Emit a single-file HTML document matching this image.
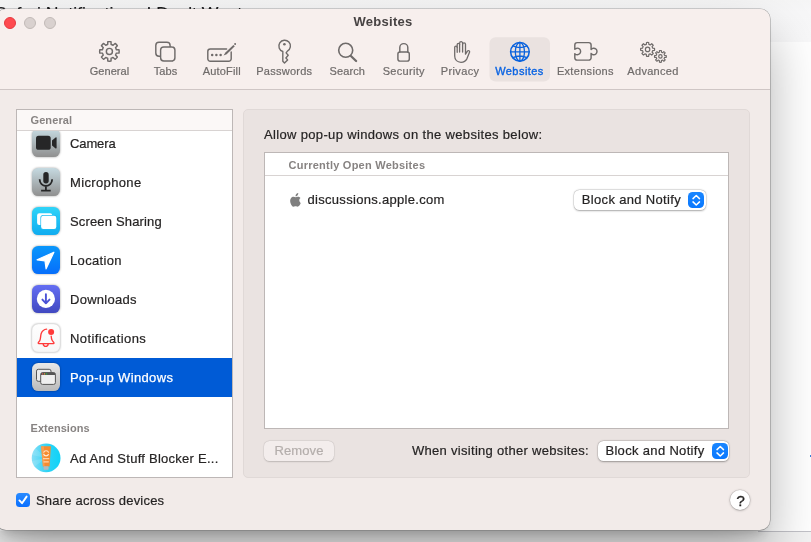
<!DOCTYPE html>
<html lang="en">
<head>
<meta charset="utf-8">
<title>Websites</title>
<style>
*{box-sizing:border-box;margin:0;padding:0}
html,body{width:811px;height:542px;overflow:hidden}
body{position:relative;background:#fff;font-family:"Liberation Sans",sans-serif;font-size:13px;color:#262424;-webkit-font-smoothing:antialiased;-webkit-text-stroke-width:.2px}
.abs{position:absolute}
#bgtop{left:0;top:0;width:811px;height:42px;background:linear-gradient(#f5f5f5 0,#f7f7f8 12px,#f8f8f9 100%)}
#bgtitle{will-change:transform;left:-4.7px;top:3.7px;font-size:17.6px;color:#1d1d1f;white-space:nowrap}
#bgbot{left:0;top:531px;width:811px;height:11px;background:linear-gradient(90deg,#f3f3f3 758px,#c2c2c8 758px) top/100% 1px no-repeat,#f3f3f3}
#win{will-change:transform;left:-4px;top:9px;width:774px;height:521px;border-radius:10px;background:#f2ebe9;
 box-shadow:0 0 0 .6px rgba(0,0,0,.32),0 27px 52px rgba(0,0,0,.3),0 10px 12px -7px rgba(0,0,0,.22);overflow:hidden}
#tbar{left:0;top:0;width:774px;height:81px;background:#f7efed;border-bottom:1px solid #cfc6c5}
.tl{top:8px;width:12px;height:12px;border-radius:50%;background:#d9d1cf;border:1px solid #c1b9b7}
#title{-webkit-text-stroke-width:0;left:0;top:5px;width:774px;text-align:center;font-weight:700;font-size:13px;color:#474343;letter-spacing:.27px;padding-left:0}
.lb{top:56px;width:80px;font-size:11px;color:#6f6b6a;text-align:center;white-space:nowrap;letter-spacing:.05px}
#side{left:20px;top:100px;width:217px;height:369px;background:#fff;border:1px solid #bdb7b6;overflow:hidden}
.hdr{left:0;top:0;width:215px;height:21px;background:#fbf8f7;border-bottom:1px solid #d8d3d2;z-index:3}
.sec{font-weight:700;font-size:11px;color:#878382;letter-spacing:.1px;-webkit-text-stroke-width:0}
.row{left:0;width:215px;height:39px}
.row .ic{position:absolute;left:15px;top:5px;filter:drop-shadow(0 .8px .9px rgba(0,0,0,.38))}
.row .tx{position:absolute;left:53px;top:12px;white-space:nowrap;letter-spacing:.35px}
.sel{background:#005bd6;color:#fff;-webkit-text-stroke:.25px #fff}
#box{left:247px;top:100px;width:507px;height:369px;background:#eae3e1;border:1px solid #e0d9d7;border-radius:5px}
#tbl{left:268px;top:143px;width:465px;height:277px;background:#fff;border:1px solid #bdb7b6}
.pop{width:131.5px;height:20px;background:#fff;border-radius:5.5px;box-shadow:0 0 0 .5px rgba(0,0,0,.12),0 .5px 2px rgba(0,0,0,.3)}
.pop .t{position:absolute;left:7.6px;top:2.7px;letter-spacing:.33px;white-space:nowrap}
.pop .st{position:absolute;right:1.5px;top:1.9px;width:16.3px;height:16.3px;border-radius:4.6px;background:linear-gradient(#1a86ff,#0978ff)}
</style>
</head>
<body>
<div class="abs" id="bgtop"></div>
<div class="abs" id="bgtitle">Safari Notifications I Don't Want</div>
<div class="abs" id="bgbot"></div>
<div class="abs" style="left:809.8px;top:454.6px;width:2px;height:2.5px;background:#3b7fdc"></div>

<div class="abs" id="win">
 <div class="abs" id="tbar"></div>
 <div class="abs tl" style="left:8px;background:#fe4a4f;border-color:#e5393f"></div>
 <div class="abs tl" style="left:28px"></div>
 <div class="abs tl" style="left:48px"></div>
 <div class="abs" id="title">Websites</div>

 <!-- toolbar items inserted here -->
 <!--TB0--><svg class="abs" style="left:0;top:0" width="774" height="81" viewBox="-4 9 774 81" fill="none" stroke="#6f6b6a" stroke-width="1.45" stroke-linejoin="round" stroke-linecap="round">
<rect x="489.5" y="37.3" width="60.5" height="44.2" rx="6" fill="#eae2e0" stroke="none"/>
<path d="M107.68 44.51L107.79 41.78A9.75 9.75 0 0 1 111.01 41.78L111.12 44.51A7.10 7.10 0 0 1 113.06 45.31L115.06 43.46A9.75 9.75 0 0 1 117.34 45.74L115.49 47.74A7.10 7.10 0 0 1 116.29 49.68L119.02 49.79A9.75 9.75 0 0 1 119.02 53.01L116.29 53.12A7.10 7.10 0 0 1 115.49 55.06L117.34 57.06A9.75 9.75 0 0 1 115.06 59.34L113.06 57.49A7.10 7.10 0 0 1 111.12 58.29L111.01 61.02A9.75 9.75 0 0 1 107.79 61.02L107.68 58.29A7.10 7.10 0 0 1 105.74 57.49L103.74 59.34A9.75 9.75 0 0 1 101.46 57.06L103.31 55.06A7.10 7.10 0 0 1 102.51 53.12L99.78 53.01A9.75 9.75 0 0 1 99.78 49.79L102.51 49.68A7.10 7.10 0 0 1 103.31 47.74L101.46 45.74A9.75 9.75 0 0 1 103.74 43.46L105.74 45.31A7.10 7.10 0 0 1 107.68 44.51 Z"/><circle cx="109.4" cy="51.4" r="3.05"/>
<rect x="155.8" y="42.3" width="14.3" height="14" rx="3.2"/><rect x="160.6" y="46.9" width="14.3" height="14.1" rx="3.2" fill="#f7efed"/>
<path d="M226.6 48.9H210.3a2.5 2.5 0 0 0-2.5 2.5v7.3a2.5 2.5 0 0 0 2.5 2.5h18.4a2.5 2.5 0 0 0 2.5-2.5V52"/>
<g fill="#6f6b6a" stroke="none"><circle cx="212.2" cy="55.1" r="1.25"/><circle cx="216.4" cy="55.1" r="1.25"/><circle cx="220.6" cy="55.1" r="1.25"/><circle cx="235.1" cy="44" r="1"/>
<path d="M223.6 55.6L225.4 52.6L233.4 44.9L234.8 46.3L226.7 54.2Z"/></g>
<path d="M282.8 51.5V61.2L284.5 63L287.6 59.9L285.9 58L288.2 55.3L286.1 52.9L287.4 51.1A5.8 5.8 0 1 0 282.8 51.5Z" stroke-width="1.4"/><circle cx="284.4" cy="44.2" r="1.3" fill="#6f6b6a" stroke="none"/>
<circle cx="345.7" cy="50.3" r="7" stroke-width="1.6"/><path d="M350.9 56L356.1 61" stroke-width="2.3"/>
<rect x="397.9" y="51.9" width="11.4" height="9.2" rx="2.1"/><path d="M399.8 51.9V47.6a4 4 0 0 1 8 0V51.9"/>
<g stroke-width="1.3"><path d="M454.7 56V47.3a1.25 1.25 0 0 1 2.5 0V44.5a1.2 1.2 0 0 1 2.4 0V43.2a1.5 1.5 0 0 1 3 0V44.3a1.45 1.45 0 0 1 2.9 0V54.2L467.6 50.9a1.2 1.2 0 0 1 2 1.1L467 58.6C465.6 61.4 463.2 62.3 461 62.3C457.4 62.3 454.7 60 454.7 56Z"/><path d="M457.2 47.3V52.3M459.6 44.5V52M462.6 44.3V52"/></g>
<g stroke="#0b63dd" stroke-width="1.3"><circle cx="519.9" cy="51.8" r="9.3" stroke-width="1.55"/><ellipse cx="519.9" cy="51.8" rx="4.6" ry="9.3"/><path d="M519.9 42.5V61.1M510.6 51.8H529.2M512.9 45.9C517 47.9 522.8 47.9 526.9 45.9M512.9 57.7C517 55.7 522.8 55.7 526.9 57.7"/></g>
<path d="M574.8 49.3V45a2.4 2.4 0 0 1 2.4-2.4H588.7a2.4 2.4 0 0 1 2.4 2.4V49.6A3.25 3.25 0 1 1 591.1 53.4V57.7a2.4 2.4 0 0 1-2.4 2.4H577.2a2.4 2.4 0 0 1-2.4-2.4V53.6A3.3 3.3 0 1 0 574.8 49.3Z"/>
<g stroke-width="1.2"><path d="M646.34 44.35L646.50 42.49A7.00 7.00 0 0 1 648.70 42.49L648.86 44.35A5.20 5.20 0 0 1 650.28 44.94L651.71 43.74A7.00 7.00 0 0 1 653.26 45.29L652.06 46.72A5.20 5.20 0 0 1 652.65 48.14L654.51 48.30A7.00 7.00 0 0 1 654.51 50.50L652.65 50.66A5.20 5.20 0 0 1 652.06 52.08L653.26 53.51A7.00 7.00 0 0 1 651.71 55.06L650.28 53.86A5.20 5.20 0 0 1 648.86 54.45L648.70 56.31A7.00 7.00 0 0 1 646.50 56.31L646.34 54.45A5.20 5.20 0 0 1 644.92 53.86L643.49 55.06A7.00 7.00 0 0 1 641.94 53.51L643.14 52.08A5.20 5.20 0 0 1 642.55 50.66L640.69 50.50A7.00 7.00 0 0 1 640.69 48.30L642.55 48.14A5.20 5.20 0 0 1 643.14 46.72L641.94 45.29A7.00 7.00 0 0 1 643.49 43.74L644.92 44.94A5.20 5.20 0 0 1 646.34 44.35 Z"/><circle cx="647.6" cy="49.4" r="2.2"/><path d="M659.36 52.23L659.48 50.57A5.90 5.90 0 0 1 661.32 50.57L661.44 52.23A4.30 4.30 0 0 1 662.61 52.71L663.87 51.63A5.90 5.90 0 0 1 665.17 52.93L664.09 54.19A4.30 4.30 0 0 1 664.57 55.36L666.23 55.48A5.90 5.90 0 0 1 666.23 57.32L664.57 57.44A4.30 4.30 0 0 1 664.09 58.61L665.17 59.87A5.90 5.90 0 0 1 663.87 61.17L662.61 60.09A4.30 4.30 0 0 1 661.44 60.57L661.32 62.23A5.90 5.90 0 0 1 659.48 62.23L659.36 60.57A4.30 4.30 0 0 1 658.19 60.09L656.93 61.17A5.90 5.90 0 0 1 655.63 59.87L656.71 58.61A4.30 4.30 0 0 1 656.23 57.44L654.57 57.32A5.90 5.90 0 0 1 654.57 55.48L656.23 55.36A4.30 4.30 0 0 1 656.71 54.19L655.63 52.93A5.90 5.90 0 0 1 656.93 51.63L658.19 52.71A4.30 4.30 0 0 1 659.36 52.23 Z"/><circle cx="660.4" cy="56.4" r="1.7"/></g>
</svg>
 <div class="abs lb" style="left:73.5px">General</div>
 <div class="abs lb" style="left:129.5px">Tabs</div>
 <div class="abs lb" style="left:185.8px;letter-spacing:0.15px">AutoFill</div>
 <div class="abs lb" style="left:248.3px;letter-spacing:0.26px">Passwords</div>
 <div class="abs lb" style="left:311.3px;letter-spacing:0.1px">Search</div>
 <div class="abs lb" style="left:367.8px;letter-spacing:0.3px">Security</div>
 <div class="abs lb" style="left:424.1px;letter-spacing:0.35px">Privacy</div>
 <div class="abs lb" style="left:483.5px;color:#0b64e2;-webkit-text-stroke:.35px #0b64e2;letter-spacing:.45px">Websites</div>
 <div class="abs lb" style="left:549.4px;letter-spacing:0.32px">Extensions</div>
 <div class="abs lb" style="left:617.0px;letter-spacing:0.3px">Advanced</div>
<!--TB1-->

 <div class="abs" id="side">
  <div class="abs hdr"><span class="abs sec" style="left:13.5px;top:4px">General</span></div>
  <!--R0-->
  <div class="row abs" style="top:14px"><svg class="ic" width="28" height="28" viewBox="0 0 28 28"><defs><linearGradient id="gc" x1="0" y1="0" x2="0" y2="1"><stop offset="0" stop-color="#c6dae1"/><stop offset="1" stop-color="#909090"/></linearGradient></defs><rect width="28" height="28" rx="6.3" fill="url(#gc)"/><rect x="4" y="6.8" width="14.7" height="14" rx="2.6" fill="#262627"/><path d="M20 11.4L23.6 8.4Q24.6 7.8 24.6 9V18.8Q24.6 20 23.6 19.4L20 16.4Z" fill="#262627"/></svg><span class="tx" style="letter-spacing:-0.12px">Camera</span></div>
  <div class="row abs" style="top:53px"><svg class="ic" width="28" height="28" viewBox="0 0 28 28"><defs><linearGradient id="gm" x1="0" y1="0" x2="0" y2="1"><stop offset="0" stop-color="#c6dae1"/><stop offset="1" stop-color="#909090"/></linearGradient></defs><rect width="28" height="28" rx="6.3" fill="url(#gm)"/><rect x="11.3" y="4" width="5.4" height="11.4" rx="2.7" fill="#262627"/><path d="M7.7 11.3V11.8a6.2 6.2 0 0 0 12.4 0V11.3M13.9 18V22.6M9.1 22.6H18.7" fill="none" stroke="#262627" stroke-width="1.8"/></svg><span class="tx" style="letter-spacing:0.36px">Microphone</span></div>
  <div class="row abs" style="top:92px"><svg class="ic" width="28" height="28" viewBox="0 0 28 28"><defs><linearGradient id="gs" x1="0" y1="0" x2="0" y2="1"><stop offset="0" stop-color="#2fd4f8"/><stop offset="1" stop-color="#10acf0"/></linearGradient></defs><rect width="28" height="28" rx="6.3" fill="url(#gs)"/><rect x="5.1" y="6.2" width="15.1" height="11.8" rx="2.2" fill="#fff"/><rect x="8.4" y="8.1" width="16.6" height="14.6" rx="2.8" fill="#1cbcf3"/><rect x="9.1" y="8.8" width="15.2" height="13.2" rx="2.2" fill="#fff"/></svg><span class="tx" style="letter-spacing:0.16px">Screen Sharing</span></div>
  <div class="row abs" style="top:131px"><svg class="ic" width="28" height="28" viewBox="0 0 28 28"><defs><linearGradient id="gl" x1="0" y1="0" x2="0" y2="1"><stop offset="0" stop-color="#0a97fb"/><stop offset="1" stop-color="#066efb"/></linearGradient></defs><rect width="28" height="28" rx="6.3" fill="url(#gl)"/><path d="M21.9 6.2L5.1 13.8L13 14.8L14.1 22.8Z" fill="#fff" stroke="#fff" stroke-width="1.2" stroke-linejoin="round"/></svg><span class="tx" style="letter-spacing:0.35px">Location</span></div>
  <div class="row abs" style="top:170px"><svg class="ic" width="28" height="28" viewBox="0 0 28 28"><defs><linearGradient id="gd" x1="0" y1="0" x2="0" y2="1"><stop offset="0" stop-color="#646ef3"/><stop offset="1" stop-color="#4048c0"/></linearGradient></defs><rect width="28" height="28" rx="6.3" fill="url(#gd)"/><circle cx="13.9" cy="13.9" r="9.1" fill="#fff"/><path d="M13.9 9.3V18.2M10.4 14.6L13.9 18.3L17.5 14.6" fill="none" stroke="#4a52d6" stroke-width="1.9" stroke-linecap="round" stroke-linejoin="round"/></svg><span class="tx" style="letter-spacing:0.28px">Downloads</span></div>
  <div class="row abs" style="top:209px"><svg class="ic" width="28" height="28" viewBox="0 0 28 28"><defs><linearGradient id="gn" x1="0" y1="0" x2="0" y2="1"><stop offset="0" stop-color="#fefefe"/><stop offset="1" stop-color="#f7f7f7"/></linearGradient></defs><rect width="28" height="28" rx="6.3" fill="url(#gn)" stroke="#e4e4e4" stroke-width=".5"/><path d="M14.6 5.2C12.5 5.4 10.2 7 9.2 9.6C8.4 11.8 8.8 14.8 7.8 16.6C7.2 17.7 6.2 18.2 6.2 19C6.2 19.4 6.5 19.6 7 19.6H21.3C21.8 19.6 22 19.3 22 19C22 18.2 20.6 17.4 20 16C19.4 14.6 19.3 13.4 19.2 12.2M11.1 19.8C11.4 21.4 12.4 22.4 13.7 22.4C15 22.4 16 21.4 16.3 19.8" fill="none" stroke="#ff3a3a" stroke-width="1.35" stroke-linecap="round"/><circle cx="19.1" cy="7.9" r="3" fill="#ff3a3a"/></svg><span class="tx" style="letter-spacing:0.42px">Notifications</span></div>
  <div class="row abs sel" style="top:248px"><svg class="ic" width="28" height="28" viewBox="0 0 28 28"><defs><linearGradient id="gp" x1="0" y1="0" x2="0" y2="1"><stop offset="0" stop-color="#e8e8e8"/><stop offset="1" stop-color="#bababa"/></linearGradient></defs><rect width="28" height="28" rx="6.3" fill="url(#gp)"/><rect x="4.5" y="6.3" width="14.5" height="12" rx="1.8" fill="#ececec" stroke="#555" stroke-width="1"/><rect x="8.7" y="9.6" width="14.7" height="11.8" rx="1.8" fill="#efefef" stroke="#555" stroke-width="1"/><path d="M8.7 12.1V11.4a1.8 1.8 0 0 1 1.8-1.8H21.6a1.8 1.8 0 0 1 1.8 1.8V12.1Z" fill="#555"/><circle cx="10.6" cy="10.9" r=".6" fill="#ff5f57"/><circle cx="12.6" cy="10.9" r=".6" fill="#febc2e"/><circle cx="14.6" cy="10.9" r=".6" fill="#28c840"/></svg><span class="tx" style="letter-spacing:0.36px">Pop-up Windows</span></div>
  <span class="abs sec" style="left:13.5px;top:312px;letter-spacing:.05px">Extensions</span>
  <svg class="abs" style="left:14px;top:333px" width="30" height="30" viewBox="0 0 30 30"><defs><linearGradient id="ga" x1="0" y1="0" x2="1" y2="0"><stop offset="0" stop-color="#86def6"/><stop offset=".55" stop-color="#2fd3f5"/><stop offset="1" stop-color="#0fd3f8"/></linearGradient></defs><circle cx="15.1" cy="14.9" r="14.4" fill="url(#ga)"/><path d="M15.1 14.9L.9 12A14.4 14.4 0 0 1 4.5 5.2ZM15.1 14.9L1 17.9A14.4 14.4 0 0 0 3.6 23.6Z" fill="#fff" opacity=".13"/><path d="M10.1 3.3H19.9L18.6 23.4H11.9Z" fill="#f68c30"/><path d="M10.1 3.3H13L13.6 23.4H11.9Z" fill="#f9a45a" opacity=".7"/><rect x="12.6" y="23.3" width="5" height="3.4" rx=".6" fill="#b9b9b9"/><path d="M12.6 9.6a2.6 2.6 0 0 1 5 0M12.6 11a2.6 2.6 0 0 0 5 0" fill="none" stroke="#ffe9d2" stroke-width="1.1"/><path d="M12 15.6H18.3M12.5 18.9H17.8" stroke="#ffd3a8" stroke-width="1.4"/></svg>
  <span class="abs" style="left:53px;top:341px;letter-spacing:.26px;white-space:nowrap">Ad And Stuff Blocker E...</span>
<!--R1-->
 </div>

 <div class="abs" id="box"></div>
 <div class="abs" style="left:268px;top:118px;letter-spacing:.34px;white-space:nowrap">Allow pop-up windows on the websites below:</div>
 <div class="abs" id="tbl">
  <div class="abs" style="left:0;top:0;width:463px;height:23px;border-bottom:1px solid #d8d3d2"></div>
  <span class="abs sec" style="left:23.5px;top:6px;letter-spacing:.24px;white-space:nowrap">Currently Open Websites</span>
  <svg class="abs" style="left:25px;top:40.2px" width="11.2" height="13.7" viewBox="0 0 11 13.5"><path fill="#7f7f7f" d="M5.4 3.3C5.3 1.7 6.6.3 8.1.1C8.3 1.7 7 3.2 5.4 3.3ZM10.6 9.9C10.2 10.9 9.9 11.4 9.4 12.1C8.7 13.1 8 13.5 7.3 13.5C6.6 13.5 6.3 13.1 5.4 13.1C4.5 13.1 4.2 13.5 3.5 13.5C2.8 13.5 2.2 13 1.5 12C.2 10.1-.5 6.9.9 5.1C1.6 4.2 2.6 3.7 3.5 3.7C4.4 3.7 5 4.2 5.6 4.2C6.2 4.2 6.9 3.6 8 3.7C8.8 3.7 9.7 4.1 10.3 5C8.6 6 8.9 8.9 10.6 9.9Z"/></svg>
  <span class="abs" style="left:42.5px;top:39px;letter-spacing:.3px;white-space:nowrap">discussions.apple.com</span>
  <div class="abs pop" style="left:309.2px;top:36.7px"><span class="t">Block and Notify</span><span class="st"><svg width="16.3" height="16.3" viewBox="0 0 16.3 16.3" style="position:absolute;left:0;top:0"><path d="M5 6.6L8.25 3.5L11.5 6.6M5 9.9L8.25 13L11.5 9.9" fill="none" stroke="#fff" stroke-width="1.5" stroke-linecap="round" stroke-linejoin="round"/></svg></span></div>
 </div>
 <div class="abs" style="left:268px;top:432px;width:70px;height:20px;border-radius:5.5px;background:#f3edec;box-shadow:0 0 0 .5px rgba(0,0,0,.06),0 .5px 1.5px rgba(0,0,0,.16);color:#b4aeac;text-align:center;line-height:20px;letter-spacing:.12px">Remove</div>
 <div class="abs" style="left:300px;width:293px;top:434px;text-align:right;letter-spacing:.3px;white-space:nowrap">When visiting other websites:</div>
 <div class="abs pop" style="left:601.8px;top:432.1px"><span class="t" style="top:1.7px">Block and Notify</span><span class="st"><svg width="16.3" height="16.3" viewBox="0 0 16.3 16.3" style="position:absolute;left:0;top:0"><path d="M5 6.6L8.25 3.5L11.5 6.6M5 9.9L8.25 13L11.5 9.9" fill="none" stroke="#fff" stroke-width="1.5" stroke-linecap="round" stroke-linejoin="round"/></svg></span></div>

 <!-- checkbox -->
 <div class="abs" style="left:20px;top:484px;width:14px;height:14px;border-radius:3.5px;background:linear-gradient(#2a8bff,#0a6fff)">
  <svg width="14" height="14" viewBox="0 0 14 14" style="position:absolute;left:0;top:0"><path d="M3.4 7.4 L6 10.2 L10.6 3.6" fill="none" stroke="#fff" stroke-width="1.9" stroke-linecap="round" stroke-linejoin="round"/></svg>
 </div>
 <div class="abs" style="left:40px;top:484px;letter-spacing:.2px;white-space:nowrap">Share across devices</div>
 <div class="abs" style="left:734px;top:481px;width:20px;height:20px;border-radius:50%;background:#fff;box-shadow:0 0 0 .5px rgba(0,0,0,.12),0 .5px 2.5px rgba(0,0,0,.3);text-align:center;line-height:21px;font-size:15.5px;-webkit-text-stroke:.3px #262424;color:#262424;padding-left:1px">?</div>
</div>
</body>
</html>
